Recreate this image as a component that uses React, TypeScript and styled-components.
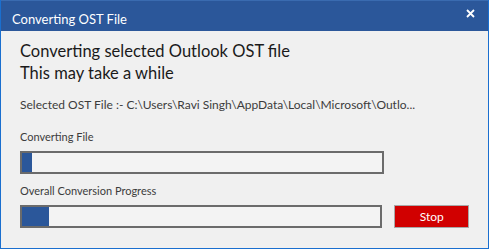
import styled, { createGlobalStyle } from "styled-components";

const GlobalStyle = createGlobalStyle`
  html, body {
    margin: 0;
    padding: 0;
    background: #f0f0f0;
  }
  * {
    box-sizing: border-box;
  }
`;

const Window = styled.div`
  width: 489px;
  height: 249px;
  display: flex;
  flex-direction: column;
  background: #f0f0f0;
  border: 1px solid #1a6fcf;
  border-top: none;
  font-family: Lato, "Noto Sans", "Liberation Sans", sans-serif;
  overflow: hidden;
`;

const TitleBar = styled.div`
  height: 31px;
  flex: none;
  display: flex;
  justify-content: space-between;
  align-items: flex-start;
  background: #2b579a;
  border-top: 1px solid #3a6bb0;
  color: #ffffff;
`;

const Title = styled.span`
  margin: 10px 0 0 11px;
  font-size: 13px;
  line-height: 16px;
`;

const CloseButton = styled.button`
  margin: 6px 12px 0 0;
  width: 12px;
  height: 12px;
  padding: 0;
  border: none;
  background: transparent;
  display: flex;
  align-items: center;
  justify-content: center;
  cursor: pointer;
`;

const Body = styled.div`
  flex: 1;
  padding: 9px 19px 0 19px;
  display: flex;
  flex-direction: column;
`;

const Heading = styled.h1`
  margin: 0;
  font-size: 16.5px;
  font-weight: 400;
  line-height: 22px;
  color: #1a1a1a;
`;

const FilePath = styled.p`
  margin: 13px 0 0 0;
  font-size: 12px;
  line-height: 16px;
  color: #3c3c3c;
  white-space: nowrap;
`;

const Label = styled.div<{ $top: number }>`
  margin-top: ${({ $top }) => $top}px;
  font-size: 11px;
  line-height: 16px;
  color: #3c3c3c;
`;

const ProgressRow = styled.div`
  margin-top: 6px;
  display: flex;
  align-items: center;
  gap: 12px;
`;

const Track = styled.div`
  width: 364px;
  height: 23px;
  border: 2px solid #6b6b6b;
  background: #f3f3f3;
  display: flex;
`;

const Fill = styled.div`
  background: #2b579a;
  height: 100%;
`;

const StopButton = styled.button`
  width: 75px;
  height: 23px;
  background: #d10000;
  border: 1px solid #a8a8a8;
  color: #ffffff;
  font-family: Lato, "Noto Sans", "Liberation Sans", sans-serif;
  font-size: 12px;
  padding: 0;
  cursor: pointer;
`;

const Progress = ({ value }: { value: number }) => (
  <Track>
    <Fill style={{ width: `${value}%` }} />
  </Track>
);

const App = () => {
  return (
    <>
      <GlobalStyle />
      <Window>
        <TitleBar>
          <Title>Converting OST File</Title>
          <CloseButton aria-label="Close">
            <svg width="9" height="9" viewBox="0 0 9 9">
              <path d="M1 1L8 8M8 1L1 8" stroke="#ffffff" strokeWidth="1.8" />
            </svg>
          </CloseButton>
        </TitleBar>
        <Body>
          <Heading>
            Converting selected Outlook OST file
            <br />
            This may take a while
          </Heading>
          <FilePath>Selected OST File :- C:\Users\Ravi Singh\AppData\Local\Microsoft\Outlo...</FilePath>
          <Label $top={16}>Converting File</Label>
          <ProgressRow>
            <Progress value={2.8} />
          </ProgressRow>
          <Label $top={9}>Overall Conversion Progress</Label>
          <ProgressRow>
            <Progress value={7.5} />
            <StopButton>Stop</StopButton>
          </ProgressRow>
        </Body>
      </Window>
    </>
  );
};

export default App;
